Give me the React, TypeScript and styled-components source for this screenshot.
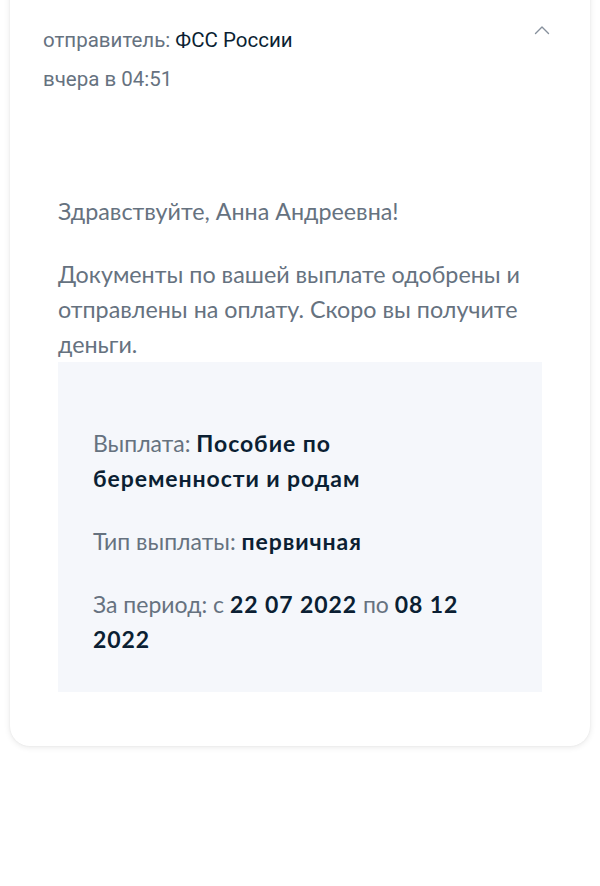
import React from "react";
import styled, { createGlobalStyle } from "styled-components";

const GlobalStyle = createGlobalStyle`
  html, body {
    margin: 0;
    padding: 0;
    background: #ffffff;
  }
  body {
    font-family: "Roboto", "Liberation Sans", sans-serif;
  }
`;

const Page = styled.div`
  width: 600px;
  min-height: 886px;
  padding: 0 10px;
  box-sizing: border-box;
`;

const Card = styled.div`
  margin-top: -30px;
  background: #ffffff;
  border-radius: 20px;
  box-shadow: 0 1px 6px rgba(0, 0, 0, 0.1), 0 0 2px rgba(0, 0, 0, 0.06);
  padding: 60px 48px 54px 33px;
`;

const Header = styled.div`
  display: flex;
  justify-content: space-between;
  align-items: flex-start;
  margin-right: -9px;
`;

const Meta = styled.div`
  display: flex;
  flex-direction: column;
  gap: 19px;
  font-size: 20.5px;
`;

const MetaLine = styled.div`
  color: #66727f;
  line-height: 20px;
`;

const Sender = styled.span`
  color: #0b1f33;
`;

const Toggle = styled.button`
  border: none;
  background: none;
  padding: 0;
  margin-top: -9px;
  width: 18px;
  height: 18px;
  display: flex;
  align-items: center;
  justify-content: center;
  cursor: pointer;
`;

const Body = styled.div`
  margin-top: 105px;
  padding-left: 15px;
  font-family: "Lato", "Liberation Sans", sans-serif;
  font-size: 23.3px;
  line-height: 35px;
  color: #66727f;
`;

const Paragraph = styled.p<{ $gap?: number }>`
  margin: 0 0 ${(p) => p.$gap ?? 0}px;
`;

const InfoBox = styled.div`
  background: #f5f7fb;
  padding: 64px 35px 35px;
  display: flex;
  flex-direction: column;
  gap: 28px;
  font-size: 23px;
`;

const InfoRow = styled.div`
  color: #66727f;
  line-height: 35px;
  padding-right: 34px;
`;

const Value = styled.b`
  color: #0b1f33;
  font-weight: 700;
  letter-spacing: 0.04em;
`;

function Chevron() {
  return (
    <svg width="16" height="10" viewBox="0 0 16 10" fill="none">
      <path d="M1.5 8.5 L8 2 L14.5 8.5" stroke="#86909c" strokeWidth="1.4" strokeLinecap="round" strokeLinejoin="round" />
    </svg>
  );
}

export default function App() {
  return (
    <Page>
      <GlobalStyle />
      <Card>
        <Header>
          <Meta>
            <MetaLine>
              отправитель: <Sender>ФСС России</Sender>
            </MetaLine>
            <MetaLine>вчера в 04:51</MetaLine>
          </Meta>
          <Toggle aria-label="Свернуть">
            <Chevron />
          </Toggle>
        </Header>
        <Body>
          <Paragraph $gap={28}>Здравствуйте, Анна Андреевна!</Paragraph>
          <Paragraph>
            Документы по вашей выплате одобрены и отправлены на оплату. Скоро вы получите деньги.
          </Paragraph>
          <InfoBox>
            <InfoRow>
              Выплата: <Value>Пособие по беременности и родам</Value>
            </InfoRow>
            <InfoRow>
              Тип выплаты: <Value>первичная</Value>
            </InfoRow>
            <InfoRow>
              За период: с <Value>22 07 2022</Value> по <Value>08 12 2022</Value>
            </InfoRow>
          </InfoBox>
        </Body>
      </Card>
    </Page>
  );
}
